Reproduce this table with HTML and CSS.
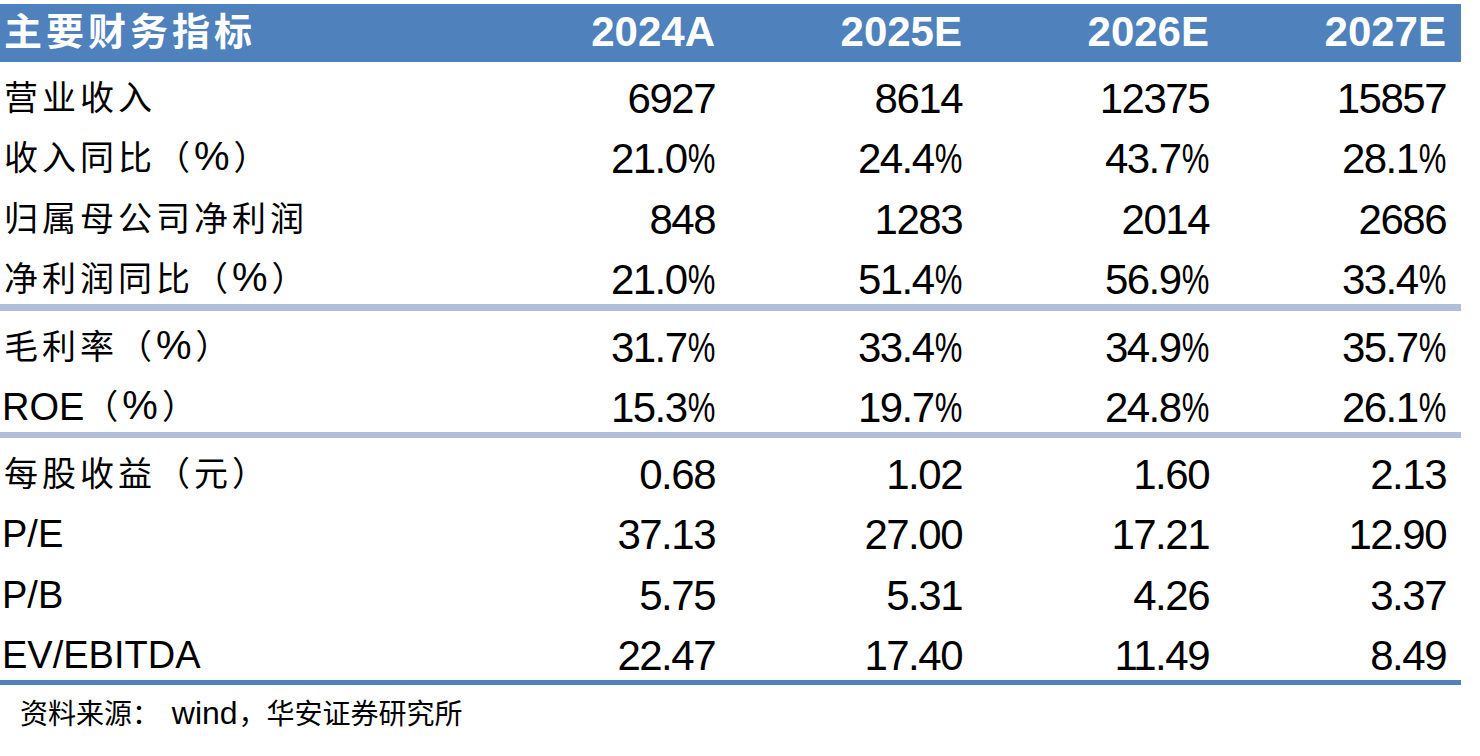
FILE: index.html
```html
<!DOCTYPE html>
<html lang="zh-CN">
<head>
<meta charset="utf-8">
<title>主要财务指标</title>
<link rel="stylesheet" href="styles.css">
</head>
<body>
<div class="table">
  <div class="row head">
    <div class="label">主要财务指标</div>
    <div class="num">2024A</div>
    <div class="num">2025E</div>
    <div class="num">2026E</div>
    <div class="num">2027E</div>
  </div>
  <div class="group g4">
    <div class="row">
      <div class="label">营业收入</div>
      <div class="num">6927</div><div class="num">8614</div><div class="num">12375</div><div class="num">15857</div>
    </div>
    <div class="row">
      <div class="label">收入同比（<span class="p">%</span>）</div>
      <div class="num">21.0<span class="pct">%</span></div><div class="num">24.4<span class="pct">%</span></div><div class="num">43.7<span class="pct">%</span></div><div class="num">28.1<span class="pct">%</span></div>
    </div>
    <div class="row">
      <div class="label">归属母公司净利润</div>
      <div class="num">848</div><div class="num">1283</div><div class="num">2014</div><div class="num">2686</div>
    </div>
    <div class="row">
      <div class="label">净利润同比（<span class="p">%</span>）</div>
      <div class="num">21.0<span class="pct">%</span></div><div class="num">51.4<span class="pct">%</span></div><div class="num">56.9<span class="pct">%</span></div><div class="num">33.4<span class="pct">%</span></div>
    </div>
  </div>
  <div class="sep"></div>
  <div class="group g2">
    <div class="row">
      <div class="label">毛利率（<span class="p">%</span>）</div>
      <div class="num">31.7<span class="pct">%</span></div><div class="num">33.4<span class="pct">%</span></div><div class="num">34.9<span class="pct">%</span></div><div class="num">35.7<span class="pct">%</span></div>
    </div>
    <div class="row">
      <div class="label"><span class="lat">ROE</span>（<span class="p">%</span>）</div>
      <div class="num">15.3<span class="pct">%</span></div><div class="num">19.7<span class="pct">%</span></div><div class="num">24.8<span class="pct">%</span></div><div class="num">26.1<span class="pct">%</span></div>
    </div>
  </div>
  <div class="sep sep2"></div>
  <div class="group g4">
    <div class="row">
      <div class="label">每股收益（元）</div>
      <div class="num">0.68</div><div class="num">1.02</div><div class="num">1.60</div><div class="num">2.13</div>
    </div>
    <div class="row">
      <div class="label"><span class="lat">P/E</span></div>
      <div class="num">37.13</div><div class="num">27.00</div><div class="num">17.21</div><div class="num">12.90</div>
    </div>
    <div class="row">
      <div class="label"><span class="lat">P/B</span></div>
      <div class="num">5.75</div><div class="num">5.31</div><div class="num">4.26</div><div class="num">3.37</div>
    </div>
    <div class="row">
      <div class="label"><span class="lat">EV/EBITDA</span></div>
      <div class="num">22.47</div><div class="num">17.40</div><div class="num">11.49</div><div class="num">8.49</div>
    </div>
  </div>
  <div class="rule"></div>
</div>
<p class="source">资料来源： <span class="w">wind</span>，华安证券研究所</p>
</body>
</html>
```

FILE: styles.css
```css
html, body {
  margin: 0;
  padding: 0;
  background: #ffffff;
}
body {
  padding-top: 4px;
  font-family: "Liberation Sans", "Noto Sans CJK SC", sans-serif;
  color: #000000;
}
.table {
  width: 1461px;
}
.row {
  display: grid;
  grid-template-columns: 468px 247px 247px 247px 252px;
  align-items: end;
  height: 60.5px;
}
.row .num:last-child {
  padding-right: 15px;
}
.label {
  padding-left: 4px;
  font-size: 34px;
  letter-spacing: 4px;
  line-height: 48px;
  white-space: nowrap;
  position: relative;
  top: -1px;
}
.label .lat {
  font-size: 38px;
  letter-spacing: 0;
  position: relative;
  top: 1px;
  margin-left: -2px;
}
.label .p {
  font-size: 40px;
  letter-spacing: 4px;
}
.num {
  text-align: right;
  font-size: 42px;
  letter-spacing: -1.5px;
  line-height: 48px;
  white-space: nowrap;
}
.pct {
  display: inline-block;
  transform: scaleX(0.74);
  transform-origin: right center;
  margin-left: -9px;
  letter-spacing: 0;
}
.head {
  height: 58px;
  background: #4f81bd;
  color: #ffffff;
  padding-bottom: 6px;
  box-sizing: border-box;
}
.head .label {
  font-size: 38px;
  font-weight: 700;
  top: 0;
}
.head .num {
  font-weight: 700;
  letter-spacing: 0;
}
.sep {
  height: 7px;
  background: #b0bfd8;
}
.sep2 {
  height: 6px;
}
.rule {
  height: 5px;
  background: #4f81bd;
}
.source {
  margin: 8px 0 0 0;
  padding-left: 20px;
  font-size: 28px;
  line-height: 40px;
  white-space: nowrap;
}
.source .w {
  font-size: 32px;
  margin: 0 1px 0 4px;
}
```
